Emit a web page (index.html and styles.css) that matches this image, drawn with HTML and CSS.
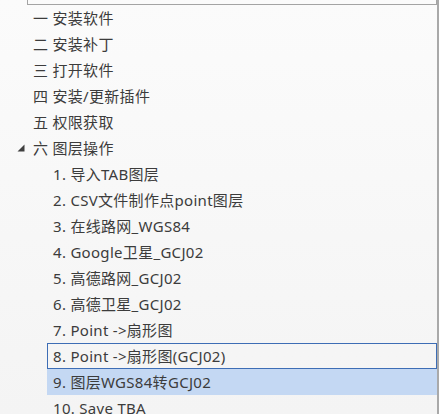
FILE: index.html
```html
<!DOCTYPE html>
<html lang="zh">
<head>
<meta charset="utf-8">
<link rel="stylesheet" href="styles.css">
</head>
<body>
<div class="tree">
  <div class="top-box"></div>
  <ul class="list">
    <li class="row top"><span class="label">一 安装软件</span></li>
    <li class="row top"><span class="label">二 安装补丁</span></li>
    <li class="row top"><span class="label">三 打开软件</span></li>
    <li class="row top"><span class="label">四 安装/更新插件</span></li>
    <li class="row top"><span class="label">五 权限获取</span></li>
    <li class="row top expanded">
      <svg class="caret" width="9" height="8" viewBox="0 0 9 8"><polygon points="8.5,0.5 8.5,7.5 1.5,7.5" fill="#3f3f3f"/></svg>
      <span class="label">六 图层操作</span>
    </li>
    <li class="row child"><span class="label">1. 导入TAB图层</span></li>
    <li class="row child"><span class="label">2. CSV文件制作点point图层</span></li>
    <li class="row child"><span class="label">3. 在线路网_WGS84</span></li>
    <li class="row child"><span class="label">4. Google卫星_GCJ02</span></li>
    <li class="row child"><span class="label">5. 高德路网_GCJ02</span></li>
    <li class="row child"><span class="label">6. 高德卫星_GCJ02</span></li>
    <li class="row child"><span class="label">7. Point -&gt;扇形图</span></li>
    <li class="row child focused"><span class="label">8. Point -&gt;扇形图(GCJ02)</span></li>
    <li class="row child selected"><span class="label">9. 图层WGS84转GCJ02</span></li>
    <li class="row child"><span class="label">10. Save TBA</span></li>
  </ul>
</div>
</body>
</html>
```

FILE: styles.css
```css
html, body {
  margin: 0;
  padding: 0;
}

body {
  width: 439px;
  height: 414px;
  overflow: hidden;
}

.tree {
  box-sizing: border-box;
  width: 439px;
  height: 414px;
  border-right: 2px solid #a9a9a9;
  background: linear-gradient(#fbfbfb, #f4f4f4);
  overflow: hidden;
  font-family: "Noto Sans", "Noto Sans CJK SC", sans-serif;
  font-size: 15px;
  letter-spacing: 0.3px;
  color: #3c3c3c;
}

.top-box {
  box-sizing: border-box;
  height: 5px;
  margin-left: 27px;
  border: 1px solid #a4a4a4;
  border-top: none;
}

.list {
  list-style: none;
  margin: 0;
  padding: 0;
}

.row {
  box-sizing: border-box;
  position: relative;
  height: 26px;
  line-height: 24px;
  border: 1px solid transparent;
  white-space: nowrap;
}

.row.top {
  margin-left: 27px;
  padding-left: 5px;
}

.row.child {
  margin-left: 47px;
  padding-left: 5px;
}

.caret {
  position: absolute;
  left: -12px;
  top: 8px;
}

.row.focused {
  border-color: #3d6db5;
}

.row.selected {
  background: #c4d8f3;
  border-color: #c4d8f3;
}
```
